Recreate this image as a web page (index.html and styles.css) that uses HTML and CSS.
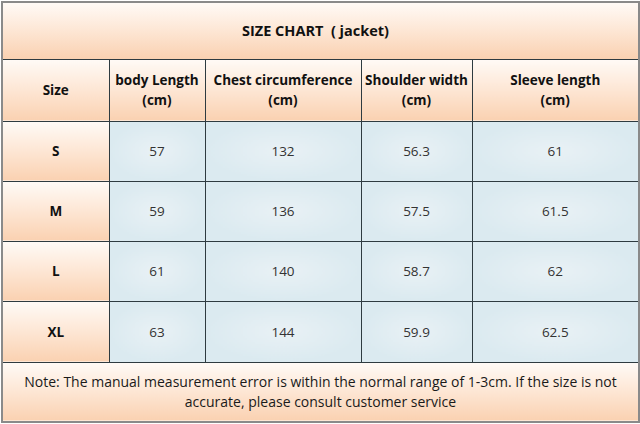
FILE: index.html
```html
<!DOCTYPE html>
<html>
<head>
<meta charset="utf-8">
<link rel="stylesheet" href="styles.css">
</head>
<body>
<table class="chart">
  <colgroup>
    <col class="c1"><col class="c2"><col class="c3"><col class="c4"><col class="c5">
  </colgroup>
  <tr class="title-row"><th colspan="5" class="peach title">SIZE CHART&nbsp;&nbsp;( jacket)</th></tr>
  <tr class="head-row">
    <th class="peach">Size</th>
    <th class="peach">body Length<br>(cm)</th>
    <th class="peach">Chest circumference<br>(cm)</th>
    <th class="peach">Shoulder width<br>(cm)</th>
    <th class="peach">Sleeve length<br>(cm)</th>
  </tr>
  <tr class="data-row"><th class="peach">S</th><td>57</td><td>132</td><td>56.3</td><td>61</td></tr>
  <tr class="data-row"><th class="peach">M</th><td>59</td><td>136</td><td>57.5</td><td>61.5</td></tr>
  <tr class="data-row"><th class="peach">L</th><td>61</td><td>140</td><td>58.7</td><td>62</td></tr>
  <tr class="data-row last"><th class="peach">XL</th><td>63</td><td>144</td><td>59.9</td><td>62.5</td></tr>
  <tr class="note-row"><td colspan="5" class="peach note">Note: The manual measurement error is within the normal range of 1-3cm. If the size is not accurate, please consult customer service</td></tr>
</table>
</body>
</html>
```
FILE: styles.css
```css
html, body {
  margin: 0;
  padding: 0;
  background: #ffffff;
}
body {
  padding: 1px 0 0 1px;
}
.chart {
  border-collapse: collapse;
  table-layout: fixed;
  width: 637px;
  font-family: "Open Sans", "Noto Sans", sans-serif;
  color: #1a1a1a;
  border: 2px solid #8a8a8a;
}
.c1 { width: 107px; }
.c2 { width: 96px; }
.c3 { width: 156px; }
.c4 { width: 111px; }
.c5 { width: 167px; }
.chart th, .chart td {
  border: 1px solid #2e3b40;
  text-align: center;
  vertical-align: middle;
  padding: 0;
}
.chart th {
  font-weight: 700;
  font-size: 13.5px;
  line-height: 20px;
  color: #111;
}
.chart td {
  font-size: 13.5px;
  color: #333;
  background: radial-gradient(ellipse at center, #e9f1f5 0%, #dbeaf0 70%);
}
.peach {
  background: linear-gradient(to bottom, #fffaf6 0%, #fde6d4 50%, #fad1b1 100%);
}
.chart td.peach {
  background: linear-gradient(to bottom, #fffaf6 0%, #fde6d4 50%, #fad1b1 100%);
}
.title-row { height: 57px; }
.chart th.title {
  font-size: 14.5px;
  padding-right: 10px;
}
.head-row { height: 62px; }
.data-row { height: 60px; }
.data-row.last { height: 61px; }
.note-row { height: 60px; }
.chart td.note {
  font-size: 14px;
  line-height: 20px;
  color: #1a1a1a;
  padding: 0 12px;
}
```
